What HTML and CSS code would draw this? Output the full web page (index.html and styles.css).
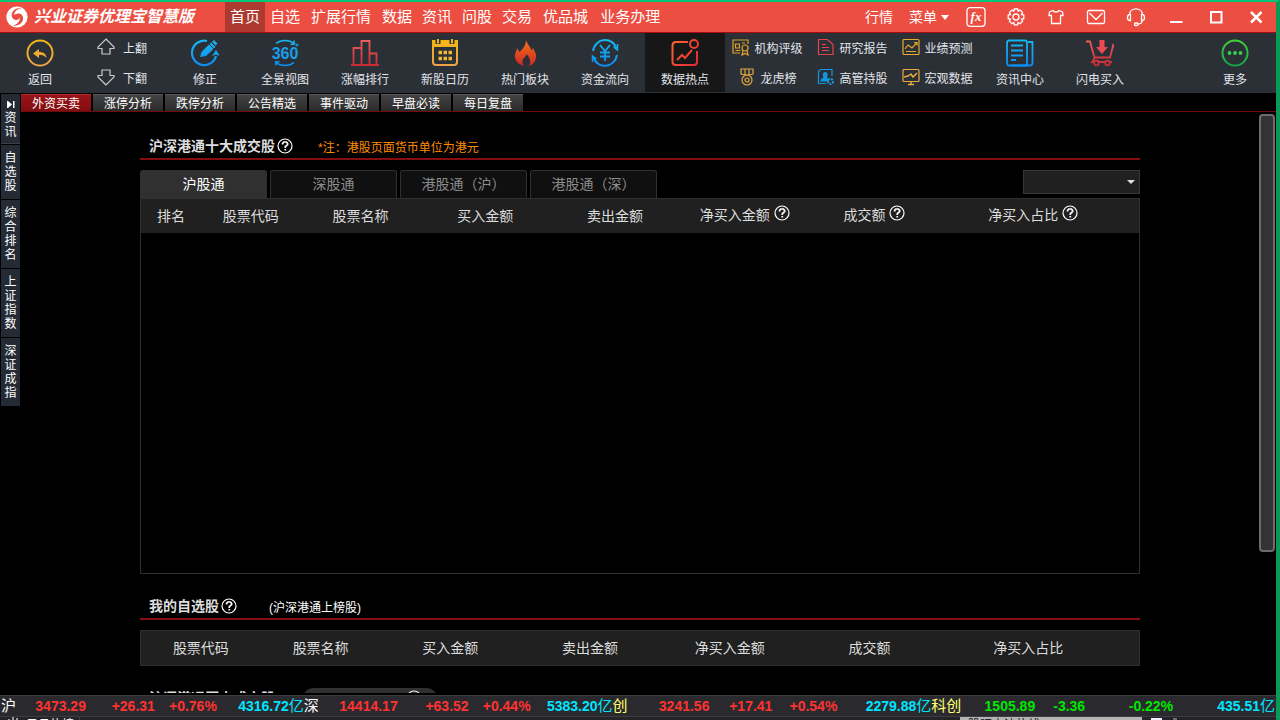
FILE: index.html
```
<!DOCTYPE html>
<html lang="zh-CN">

<head>
    <meta charset="UTF-8">
    <meta name="viewport" content="width=device-width, initial-scale=1.0">
    <title>兴业证券优理宝智慧版</title>
    <link rel="stylesheet" href="styles.css">
</head>

<body>
    <!-- shared gradients and the help mark -->
    <svg class="defs" aria-hidden="true">
        <defs>
            <linearGradient id="blue" gradientUnits="userSpaceOnUse" x1="0" y1="0" x2="0" y2="28"><stop offset="0" stop-color="#16b8ee"/><stop offset="1" stop-color="#0c8cf4"/></linearGradient>
            <linearGradient id="gold" gradientUnits="userSpaceOnUse" x1="0" y1="0" x2="0" y2="28"><stop offset="0" stop-color="#f2b70e"/><stop offset="1" stop-color="#eca14c"/></linearGradient>
            <linearGradient id="red" gradientUnits="userSpaceOnUse" x1="0" y1="0" x2="0" y2="28"><stop offset="0" stop-color="#f0605f"/><stop offset="1" stop-color="#c5292f"/></linearGradient>
            <linearGradient id="fire" gradientUnits="userSpaceOnUse" x1="0" y1="0" x2="0" y2="28"><stop offset="0" stop-color="#fa7418"/><stop offset="1" stop-color="#cb2424"/></linearGradient>
            <linearGradient id="hot" gradientUnits="userSpaceOnUse" x1="0" y1="0" x2="28" y2="20"><stop offset="0" stop-color="#ff6a30"/><stop offset="1" stop-color="#e22b38"/></linearGradient>
            <linearGradient id="green" gradientUnits="userSpaceOnUse" x1="0" y1="0" x2="0" y2="28"><stop offset="0" stop-color="#45d43a"/><stop offset="1" stop-color="#12a34c"/></linearGradient>
            <symbol id="help" viewBox="0 0 16 16"><circle cx="8" cy="8" r="7" fill="none" stroke="#fff" stroke-width="1.2"/><path d="M5.600 6.400V5.400L6.800 4h2.600l1.200 1.300v1.400L8.300 8.600v1.300M8.300 11v1.600" fill="none" stroke="#fff" stroke-width="1.700"/></symbol>
        </defs>
    </svg>

    <header class="titlebar">
        <svg class="logo" viewBox="0 0 22 22"><circle cx="11" cy="11" r="10.600" fill="#fff"/><path d="M15.500 2C9 1.500 4.500 6 6 11c1.200 3.800 6.800 4 8 .6-.4-3.200-3.800-4.600-6-2.600C8.500 4.600 12 3 15.500 2z" fill="#ea4b40"/><path d="M6.500 19.600c6.500.8 11.200-3 10.500-8.300-.5-4-5.500-5.300-8-2 2.500-1 5.200.6 4.800 3.600-.3 3.300-3.500 5.700-7.300 6.700z" fill="#ea4b40"/></svg>
        <h1>兴业证券优理宝智慧版</h1>
        <nav class="menu">
            <a class="active" href="#home">首页</a>
            <a href="#zixuan">自选</a>
            <a class="wide" href="#kuozhan">扩展行情</a>
            <a href="#shuju">数据</a>
            <a href="#zixun">资讯</a>
            <a href="#wengu">问股</a>
            <a href="#jiaoyi">交易</a>
            <a class="wide" href="#youpin">优品城</a>
            <a class="wide" href="#yewu">业务办理</a>
        </nav>
        <div class="window-tools">
            <a href="#hangqing">行情</a>
            <button class="menu-button">菜单<svg width="8" height="5" viewBox="0 0 8 5"><path d="M0 0h8L4 5z" fill="#fff"/></svg></button>
            <button aria-label="公式"><svg viewBox="0 0 20 20"><rect x="1" y="0.700" width="18" height="18.600" rx="3"/><text x="10" y="14" text-anchor="middle">fx</text></svg></button>
            <button aria-label="设置"><svg viewBox="0 0 20 20"><path d="M8.300 2h3.400l.5 2.200 1.900-1.200 2.500 2.500-1.200 2 2.400.5v3.700l-2.300.5 1.100 2-2.500 2.500-2-1.200-.5 2.300H8.300l-.5-2.300-1.900 1.200-2.500-2.500 1.200-2-2.400-.5V8l2.300-.5-1.100-2L5.900 3l1.900 1.200z"/><circle cx="10" cy="10" r="3"/></svg></button>
            <button aria-label="皮肤"><svg viewBox="0 0 20 20"><path d="M7 3.500 3.500 5 3 8.500h2.500v8h9v-8H17L16.500 5 13 3.500c-1 2-5 2-6 0z"/></svg></button>
            <button aria-label="邮件"><svg viewBox="0 0 20 20"><rect x="1.500" y="3.500" width="17" height="13" rx="1.500"/><path d="m3.500 6 6.500 6.500L16.500 6"/></svg></button>
            <button aria-label="客服"><svg viewBox="0 0 20 20"><path d="M3.500 7.500C4 0 16 0 16.500 7.500M4.500 7.500v6h-1C.8 13 .8 8 3.500 7.500zM15.500 7.500v6h1c2.700-.5 2.700-5.500 0-6zM16.500 13.500c-.5 3-2.500 3.500-4.500 3.500"/><rect x="8.500" y="16" width="3.500" height="2.500" rx="1"/></svg></button>
            <button aria-label="最小化"><svg viewBox="0 0 20 20"><path d="M4 15h12.500" stroke-width="2"/></svg></button>
            <button aria-label="最大化"><svg viewBox="0 0 20 20"><path d="M5 5h10.500v10.500H5z" stroke-width="2"/></svg></button>
            <button aria-label="关闭"><svg viewBox="0 0 20 20"><path d="m5 5 10.500 10.500M15.500 5 5 15.500" stroke-width="2.500"/></svg></button>
        </div>
    </header>

    <div class="toolbar">
        <button class="tool"><svg viewBox="0 0 28 28" fill="none" stroke="url(#gold)" stroke-width="2"><circle cx="14" cy="14" r="12.500"/><path d="M7 14.500 13 10v3c5 0 7 2 7.500 6-2-2.500-4-3-7.500-3v3z" fill="url(#gold)" stroke="none"/></svg>返回</button>
        <div class="flip">
            <button><svg viewBox="0 0 18 18"><path d="M9 1 17 9v1.500h-4V16H5v-5.500H1V9z"/></svg>上翻</button>
            <button><svg viewBox="0 0 18 18"><path d="M9 17 1 9V7.500h4V2h8v5.500h4V9z"/></svg>下翻</button>
        </div>
        <button class="tool"><svg viewBox="0 0 28 28" fill="none" stroke="url(#blue)" stroke-width="2.200"><path d="M16 2A12.200 12.200 0 1 0 25 17"/><path d="M25 11l4 6-4-1.500-4 1.500z" fill="#14a6f3" stroke="none"/><path d="m9 18 1.500-5L20 3.500 24.500 8 15 17z" fill="url(#blue)" stroke="none"/><path d="m18 5 5 5" stroke="#2b3037" stroke-width="1"/><path d="m22 2 3.500 3.500" stroke-width="2.500"/></svg>修正</button>
        <button class="tool"><svg viewBox="0 0 28 28" fill="none" stroke="url(#blue)" stroke-width="1.600"><path d="M5 4.500C10 .5 18 .5 23 4.500M5 23.500c5 4 13 4 18 0"/><path d="m23 1.500.5 3.500-4 .5M5 26.500 4.500 23l4-.5" stroke-width="1.500"/><circle cx="26" cy="6" r="1" stroke-width="1"/><text class="deg" x="14" y="20" text-anchor="middle">360</text></svg>全景视图</button>
        <button class="tool"><svg viewBox="0 0 28 28" fill="none" stroke="url(#red)" stroke-width="1.800"><path d="M0 26h28M2.500 26V9h8M10.500 26V2h8v24M18.500 14.500h7V26"/></svg>涨幅排行</button>
        <button class="tool"><svg viewBox="0 0 28 28" fill="none" stroke="url(#gold)" stroke-width="2"><rect x="2" y="3" width="24" height="23" rx="3"/><path d="M2 2h24v5H2z" fill="#f8b51d"/><path d="M7 0v5M21 0v5" stroke="#2b3037" stroke-width="5"/><path d="M7 0v4.500M21 0v4.500"/><path d="M7.500 13.500H11M12.500 13.500H16M17.500 13.500H21M7.500 19.500H11M12.500 19.500H16M17.500 19.500H21" stroke="#f0b62c" stroke-width="3.500"/></svg>新股日历</button>
        <button class="tool"><svg viewBox="0 0 28 28" fill="url(#fire)"><path d="M15 1c1.500 5 5 7 5.500 10.500L22.500 9c.2 2.500 3 5 2.500 9-.5 5-3 7.500-7 9 2-3 2-7-2.500-12-.5 3-4 4-4 7.500 0 2 .5 3.500 1.500 4.500-5-1.500-8.500-4.500-9-9C3.500 14 6 12 6 9l2.500 4C12 10 15 6 15 1z"/></svg>热门板块</button>
        <button class="tool"><svg viewBox="0 0 28 28" fill="none" stroke="url(#blue)" stroke-width="2"><path d="M2 12C4 -1.500 22 -3 25.500 10M26 16C24 29 6 31 2.500 18"/><path d="m22.500 8 4 3V5M5.500 20l-4-3v6" stroke-width="1.500"/><path d="m9 6 5 6 5-6M14 12v10M9 13.500h10M9 17.500h10" stroke-width="1.800"/></svg>资金流向</button>
        <button class="tool selected"><svg viewBox="0 0 28 28" fill="none" stroke="url(#hot)" stroke-width="2"><path d="M17 3H5Q1.500 3 1.500 6.500V23Q1.500 26 5 26h18q3 0 3-3V12"/><circle cx="23" cy="5" r="4"/><path d="m6 21 5-5 3 3 7-8"/></svg>数据热点</button>
        <div class="shortcuts">
            <button><svg viewBox="0 0 18 18" stroke="#dfa22c"><path d="M8 15H1V2h15v4M3.500 6h4v4h-4zM3.500 12.500h5M10 5h3"/><circle cx="13" cy="10" r="3"/><path d="m11 13-1 4 3-1.500 3 1.500-1-4"/></svg>机构评级</button>
            <button><svg viewBox="0 0 18 18" stroke="#e34349"><path d="M1.500 1.500h9l5.500 5v10H1.500zM5 6.500h4M5 9.500h7M5 12.500h7"/></svg>研究报告</button>
            <button><svg viewBox="0 0 18 18" stroke="#e8a82d"><rect x="1" y="1.500" width="16" height="15" rx="1"/><path d="m3 11 3-4 4 3 4.500-5M12 4.500h3v3M4 13.500h10"/></svg>业绩预测</button>
            <button><svg viewBox="0 0 18 18" stroke="#dfa73f"><path d="M3 1h12v5l-4 1H7L3 6zM7 1v6M11 1v6"/><circle cx="9" cy="12" r="5"/><circle cx="9" cy="12" r="2"/></svg>龙虎榜</button>
            <button><svg viewBox="0 0 18 18" stroke="#1594e2"><path d="M9 15.500H1.500v-12l2-2H15V8"/><path d="M4 13c.5-3 3-2 3-4C4 3 12 3 9.500 9c0 2 2 1 2 4z" fill="#1594e2"/><circle cx="13.500" cy="13.500" r="2.500" stroke-width="2" stroke-dasharray="2 1"/></svg>高管持股</button>
            <button><svg viewBox="0 0 18 18" stroke="#e8a93e"><rect x="1" y="1.500" width="16" height="12" rx="1"/><path d="m2 9 4-1 3-2 2 3 4-4M6 16.500h6M9 14v2" stroke-width="1.500"/></svg>宏观数据</button>
        </div>
        <button class="tool"><svg viewBox="0 0 28 28" fill="none" stroke="url(#blue)" stroke-width="1.800"><rect x="1" y="1.500" width="20" height="25" rx="2"/><path d="M22 3h4.500v21q0 2.500-3 2.500H5M5 6.500h12M5 11.500h12M5 16.500h12M5 21h5"/></svg>资讯中心</button>
        <button class="tool"><svg viewBox="0 0 28 28" fill="none" stroke="url(#red)" stroke-width="1.800"><path d="M0 2.500h4l4.500 16H24L27.500 5M9 18.500 6 23h20"/><circle cx="10.500" cy="24" r="2.300" fill="#2b3037"/><circle cx="21.500" cy="24" r="2.300" fill="#2b3037"/><path d="M13.500 1h5v7h3.500L16 15 10 8h3.500z" fill="#e94b50" stroke="none"/></svg>闪电买入</button>
        <button class="tool more"><svg viewBox="0 0 28 28" fill="none" stroke="url(#green)" stroke-width="2"><circle cx="14" cy="14" r="12.500"/><g fill="#36d14a" stroke="none"><circle cx="8.500" cy="14" r="1.900"/><circle cx="14" cy="14" r="1.900"/><circle cx="19.500" cy="14" r="1.900"/></g></svg>更多</button>
    </div>

    <div class="workspace">
        <nav class="sidebar">
            <a class="first" href="#side-news"><svg width="8" height="7" viewBox="0 0 8 7"><path d="M0 0h1l4 3.500L1 7H0zM6 0h1.500v7H6z" fill="#fff"/></svg>资讯</a>
            <a href="#side-own">自选股</a>
            <a href="#side-rank">综合排名</a>
            <a href="#side-sh">上证指数</a>
            <a href="#side-sz">深证成指</a>
        </nav>

        <main>
            <nav class="subtabs">
                <a class="active" href="#t1">外资买卖</a>
                <a href="#t2">涨停分析</a>
                <a href="#t3">跌停分析</a>
                <a href="#t4">公告精选</a>
                <a href="#t5">事件驱动</a>
                <a href="#t6">早盘必读</a>
                <a href="#t7">每日复盘</a>
            </nav>

            <div class="view">
                <div class="page">
                    <section>
                        <div class="heading">
                            <h2>沪深港通十大成交股</h2>
                            <svg class="help"><use href="#help"/></svg>
                            <span class="note">*注：港股页面货币单位为港元</span>
                        </div>
                        <div class="controls">
                            <div class="markets">
                                <button class="active">沪股通</button>
                                <button>深股通</button>
                                <button>港股通（沪）</button>
                                <button>港股通（深）</button>
                            </div>
                            <div class="date">
                                <select aria-label="日期">
                                    <option></option>
                                </select>
                                <svg width="8" height="4" viewBox="0 0 8 4"><path d="M0 0h8L4 4z" fill="#ddd"/></svg>
                            </div>
                        </div>
                        <div class="table-box tall">
                            <table class="top-ten">
                                <colgroup><col class="w60"><col class="w100"><col class="w120"><col class="w130"><col class="w130"><col class="w130"><col class="w130"><col></colgroup>
                                <thead>
                                    <tr>
                                        <th>排名</th>
                                        <th>股票代码</th>
                                        <th>股票名称</th>
                                        <th>买入金额</th>
                                        <th>卖出金额</th>
                                        <th>净买入金额<svg class="help"><use href="#help"/></svg></th>
                                        <th>成交额<svg class="help"><use href="#help"/></svg></th>
                                        <th>净买入占比<svg class="help"><use href="#help"/></svg></th>
                                    </tr>
                                </thead>
                            </table>
                        </div>
                    </section>

                    <section>
                        <div class="heading">
                            <h2>我的自选股</h2>
                            <svg class="help"><use href="#help"/></svg>
                            <span class="note plain">(沪深港通上榜股)</span>
                        </div>
                        <div class="table-box">
                            <table class="own">
                                <colgroup><col class="w120"><col class="w120"><col class="w140"><col class="w140"><col class="w140"><col class="w140"><col></colgroup>
                                <thead>
                                    <tr>
                                        <th>股票代码</th>
                                        <th>股票名称</th>
                                        <th>买入金额</th>
                                        <th>卖出金额</th>
                                        <th>净买入金额</th>
                                        <th>成交额</th>
                                        <th>净买入占比</th>
                                    </tr>
                                </thead>
                            </table>
                        </div>
                    </section>

                    <section>
                        <div class="heading">
                            <h2>沪深港通历史成交股</h2>
                            <button class="pill">陆港通股票资金 <svg class="help"><use href="#help"/></svg></button>
                        </div>
                    </section>
                </div>
                <div class="scroll-thumb"></div>
            </div>
        </main>
    </div>

    <footer>
        <div class="ticker">
            <span class="name">沪</span><b class="up">3473.29</b><b class="up">+26.31</b><b class="up">+0.76%</b><b class="amount">4316.72<i>亿</i></b>
            <span class="name">深</span><b class="up">14414.17</b><b class="up">+63.52</b><b class="up">+0.44%</b><b class="amount">5383.20<i>亿</i></b>
            <span class="name yellow">创</span><b class="up">3241.56</b><b class="up">+17.41</b><b class="up">+0.54%</b><b class="amount">2279.88<i>亿</i></b>
            <span class="name yellow">科创</span><b class="down">1505.89</b><b class="down">-3.36</b><b class="down">-0.22%</b><b class="amount">435.51<i>亿</i></b>
        </div>
        <div class="status">
            <span class="hotlist"><svg width="12" height="8" viewBox="0 0 12 8"><path d="M1 8V2M5 8V0M9 8V1" stroke="#999" stroke-width="2"/></svg>日月热榜</span>
            <span class="message">股吧交流热线</span>
            <svg width="44" height="12" viewBox="0 0 44 12"><path d="M1 1h11v10H1z" fill="#eef"/><path d="M3 3h7v5H3z" fill="#7aaee0"/><circle cx="25" cy="6" r="5" fill="#111"/><path d="M23 2h4" stroke="#ccc"/></svg>
        </div>
    </footer>
</body>

</html>
```
FILE: styles.css
```
* {
    box-sizing: border-box;
}

body {
    margin: 0;
    height: 100vh;
    display: flex;
    flex-direction: column;
    overflow: hidden;
    background: #000;
    color: #fff;
    font-family: "Liberation Sans", "Noto Sans CJK SC", sans-serif;
    font-size: 12px;
    border-top: 2px solid #00c878;
    border-right: 4px solid #0a9a58;
}

a {
    color: inherit;
    text-decoration: none;
}

button {
    margin: 0;
    padding: 0;
    border: 0;
    background: none;
    color: inherit;
    font: inherit;
}

.defs {
    position: absolute;
    width: 0;
    height: 0;
}

.help {
    width: 16px;
    height: 16px;
}

/* title bar */
.titlebar {
    flex: none;
    display: flex;
    align-items: center;
    height: 31px;
    padding-left: 6px;
    background: #ec4e42;
    border-bottom: 1px solid #a50d12;
}

.logo {
    width: 22px;
    height: 22px;
}

h1 {
    width: 191px;
    margin: 0 0 0 6px;
    font-size: 16px;
    line-height: 30px;
    font-style: italic;
    font-weight: bold;
    white-space: nowrap;
}

.menu {
    display: flex;
    font-size: 15px;
    line-height: 30px;
}

.menu a {
    padding: 0 5px;
    white-space: nowrap;
}

.menu .wide {
    padding: 0 6px;
}

.menu .active {
    background: #ad3a31;
}

.window-tools {
    display: flex;
    align-items: center;
    margin-left: auto;
    font-size: 14px;
    line-height: 30px;
}

.window-tools button {
    display: flex;
    align-items: center;
    justify-content: center;
    width: 40px;
    height: 30px;
}

.window-tools button svg {
    width: 20px;
    height: 20px;
    fill: none;
    stroke: #fff;
    stroke-width: 1.3;
}

.window-tools text {
    fill: #fff;
    stroke: none;
    font: italic bold 13px "Liberation Serif", serif;
}

.window-tools .menu-button {
    gap: 4px;
    width: 54px;
    margin-left: 9px;
}

.window-tools .menu-button svg {
    width: 8px;
    height: 5px;
    stroke: none;
}

/* toolbar */
.toolbar {
    flex: none;
    display: flex;
    height: 60px;
    background: #2b3037;
    color: #e2e5ea;
}

.tool {
    flex: none;
    display: flex;
    flex-direction: column;
    align-items: center;
    gap: 4px;
    width: 80px;
    padding-top: 6px;
    line-height: 18px;
}

.tool svg {
    width: 28px;
    height: 28px;
}

.tool .deg {
    fill: #189fe8;
    stroke: none;
    font: bold 16px "Liberation Sans", sans-serif;
}

.tool.selected {
    background: #171717;
    border-bottom: 1px solid #2b3037;
}

.tool.more {
    margin-left: auto;
    margin-right: 1px;
}

.flip {
    flex: none;
    display: flex;
    flex-direction: column;
    width: 85px;
    padding-left: 17px;
}

.flip button,
.shortcuts button {
    display: flex;
    align-items: center;
    height: 30px;
    padding-bottom: 2px;
}

.flip button {
    gap: 8px;
}

.flip svg {
    width: 18px;
    height: 18px;
    fill: none;
    stroke: #c8ccd0;
    stroke-width: 1.2;
}

.shortcuts {
    flex: none;
    display: grid;
    grid-template-columns: repeat(3, 85px);
    grid-template-rows: 30px 30px;
}

.shortcuts button {
    justify-content: center;
    gap: 4px;
}

.shortcuts svg {
    width: 18px;
    height: 18px;
    fill: none;
    stroke-width: 1.2;
}

/* left side and inner tabs */
.workspace {
    flex: 1;
    display: flex;
    min-height: 0;
}

.sidebar {
    flex: none;
    width: 21px;
    padding: 1px 1px 0;
}

.sidebar a {
    display: block;
    margin-bottom: 1px;
    padding: 6px 3px;
    background: #242b34;
    line-height: 14px;
    text-align: center;
    word-break: break-all;
}

.sidebar .first {
    padding: 3px 3px 4px;
    border-bottom: 1px solid #3b3f44;
}

.sidebar svg {
    display: block;
    margin: 4px auto 3px;
}

main {
    flex: 1;
    display: flex;
    flex-direction: column;
    min-width: 0;
}

.subtabs {
    flex: none;
    display: flex;
    gap: 2px;
    height: 19px;
    padding-top: 1px;
    border-bottom: 1px solid #6d0b0e;
}

.subtabs a {
    width: 70px;
    border-top: 1px solid #5a5a5a;
    background: linear-gradient(#434343, #2a2a2a);
    line-height: 18px;
    height: 17px;
    text-align: center;
}

.subtabs .active {
    border-color: #b03030;
    background: linear-gradient(#991418, #820d10);
}

.view {
    flex: 1;
    display: flex;
    min-height: 0;
    margin-bottom: 2px;
    overflow: hidden;
}

.page {
    flex: 1;
    max-width: 1000px;
    margin: 0 auto;
    padding-top: 22px;
}

.scroll-thumb {
    flex: none;
    width: 16px;
    height: 438px;
    margin: 2px 1px 0 0;
    border: 2px solid #6c6c6c;
    border-radius: 4px;
    background: #333;
}

/* content sections */
section {
    margin-bottom: 20px;
}

.heading {
    display: flex;
    align-items: center;
    height: 26px;
    margin-bottom: 10px;
    padding: 0 9px;
    border-bottom: 2px solid #850d10;
}

h2 {
    margin: 0 2px 0 0;
    color: #ddd;
    font-size: 14px;
    line-height: 24px;
}

.note {
    margin-left: 25px;
    color: #ff8c00;
}

.note.plain {
    margin-left: 32px;
    color: #fff;
}

.controls {
    display: flex;
    justify-content: space-between;
    height: 28px;
}

.markets {
    display: flex;
    gap: 3px;
}

.markets button {
    width: 127px;
    padding-bottom: 3px;
    border: 1px solid #303030;
    border-bottom: 0;
    border-radius: 3px 3px 0 0;
    background: #101010;
    color: #8c8c8c;
    font-size: 14px;
}

.markets .active {
    background: #303030;
    color: #fff;
}

.date {
    position: relative;
    width: 117px;
    height: 24px;
}

.date select {
    width: 100%;
    height: 100%;
    border: 1px solid #373737;
    border-radius: 0;
    background: #202020;
    color: #ddd;
    appearance: none;
}

.date svg {
    position: absolute;
    right: 5px;
    top: 10px;
    pointer-events: none;
}

.table-box {
    border: 1px solid #303030;
}

.table-box.tall {
    min-height: 376px;
}

table {
    width: 100%;
    table-layout: fixed;
    border-collapse: collapse;
}

th {
    height: 34px;
    padding: 0;
    background: #202020;
    color: #ddd;
    font-size: 14px;
    font-weight: normal;
    line-height: 20px;
    white-space: nowrap;
}

th .help {
    margin: 0 0 6px 4px;
    vertical-align: middle;
}

.top-ten th:last-child {
    padding-right: 12px;
}

.own th:last-child {
    padding-right: 22px;
}

.w60 {
    width: 6%;
}

.w100 {
    width: 10%;
}

.w120 {
    width: 12%;
}

.w130 {
    width: 13%;
}

.w140 {
    width: 14%;
}

.pill {
    display: flex;
    align-items: center;
    justify-content: center;
    gap: 4px;
    width: 134px;
    height: 20px;
    margin-left: 26px;
    border-radius: 10px;
    background: #303030;
}

/* index ticker and status line */
footer {
    flex: none;
    height: 25px;
    overflow: hidden;
    background: #242428;
}

.ticker {
    display: grid;
    grid-template-columns:
        20fr 65fr 69fr 62fr 87fr
        20fr 74fr 71fr 62fr 82fr
        20fr 77fr 63fr 65fr 94fr
        36fr 68fr 50fr 88fr 102fr;
    height: 22px;
    padding: 0 1px;
    border-top: 1px solid #3b3b40;
    border-bottom: 1px solid #3b3b40;
    background: #2a2a2e;
    font-size: 14px;
    line-height: 20px;
    text-align: right;
    white-space: nowrap;
}

.ticker .name {
    font-size: 15px;
    text-align: left;
}

.ticker i {
    font-size: 15px;
    font-style: normal;
    font-weight: normal;
}

.yellow {
    color: #ffff70;
}

.up {
    color: #ff3232;
}

.down {
    color: #00e600;
}

.amount {
    color: #00e5ff;
}

.status {
    display: flex;
    line-height: 16px;
}

.hotlist {
    display: flex;
    gap: 6px;
    width: 80px;
    padding-left: 8px;
    border-right: 1px solid #3b3b40;
}

.message {
    width: 182px;
    margin-left: auto;
    padding-left: 8px;
    background: #b4b4b4;
    color: #111;
}

.status > svg {
    margin: 0 82px 0 8px;
}
```
